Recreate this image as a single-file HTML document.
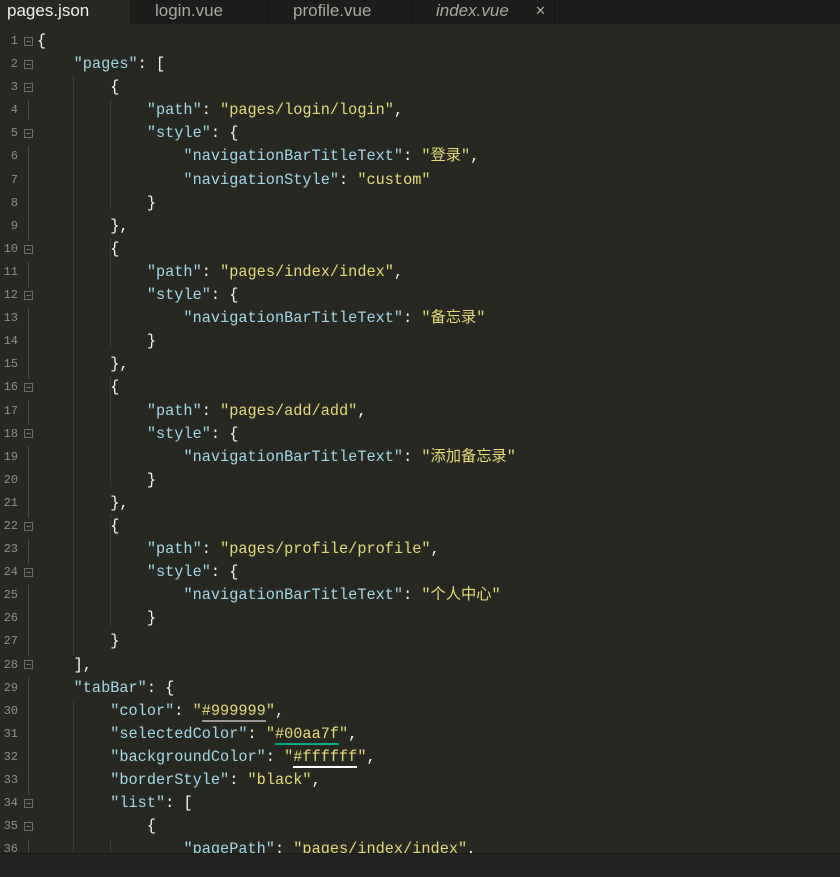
<!DOCTYPE html>
<html><head><meta charset="utf-8"><style>
body{margin:0;width:840px;height:876px;background:#272822;overflow:hidden;position:relative;font-family:"Liberation Mono","Noto Sans CJK SC",monospace}
.tabs{position:absolute;left:0;top:0;width:840px;height:24px;background:#1c1d1a}
.tab{position:absolute;top:0;height:24px;font-family:"Liberation Sans","DejaVu Sans",sans-serif;font-size:17px;line-height:22px;color:#a8a8a3;border-right:1px solid #151613;box-sizing:border-box;padding-left:24px}
.tab.a{background:#272822;color:#f0f0ea;padding-left:7px}
.code{position:absolute;left:37px;top:30px;font-size:15.25px;line-height:23.09px;white-space:pre;color:#f8f8f2}
.gut{position:absolute;left:0;top:30px;width:18px;text-align:right;font-size:12px;line-height:23.09px;color:#8f908a;white-space:pre}
.fold{position:absolute;left:24px;width:7px;height:7px;border:1px solid #6e6e68}
.fold:after{content:"";position:absolute;left:1px;right:1px;top:3px;height:1px;background:#6e6e68}
.vl{position:absolute;left:28px;width:1px;background:#4a4b45}
.k{color:#a3d8e8}.s{color:#e6db74}
.status{position:absolute;left:0;top:853px;width:840px;height:23px;background:#222320;border-top:1px solid #1a1b18}
.guide{position:absolute;width:0;border-left:1px dotted #4b4c46}
</style></head><body>
<div class="tabs">
<div class="tab a" style="left:0;width:131px">pages.json</div>
<div class="tab" style="left:131px;width:138px">login.vue</div>
<div class="tab" style="left:269px;width:143px">profile.vue</div>
<div class="tab" style="left:412px;width:143px;font-style:italic">index.vue<span style="position:absolute;left:123px;font-style:normal;font-size:13px">✕</span></div>
</div>
<div class="gut">1
2
3
4
5
6
7
8
9
10
11
12
13
14
15
16
17
18
19
20
21
22
23
24
25
26
27
28
29
30
31
32
33
34
35
36</div>
<div class="fold" style="top:37px"></div>
<div class="fold" style="top:60px"></div>
<div class="fold" style="top:83px"></div>
<div class="fold" style="top:129px"></div>
<div class="fold" style="top:245px"></div>
<div class="fold" style="top:291px"></div>
<div class="fold" style="top:383px"></div>
<div class="fold" style="top:429px"></div>
<div class="fold" style="top:522px"></div>
<div class="fold" style="top:568px"></div>
<div class="fold" style="top:660px"></div>
<div class="fold" style="top:799px"></div>
<div class="fold" style="top:822px"></div>
<div class="vl" style="top:100px;height:20px"></div>
<div class="vl" style="top:146px;height:95px"></div>
<div class="vl" style="top:262px;height:25px"></div>
<div class="vl" style="top:308px;height:71px"></div>
<div class="vl" style="top:400px;height:25px"></div>
<div class="vl" style="top:446px;height:72px"></div>
<div class="vl" style="top:539px;height:25px"></div>
<div class="vl" style="top:585px;height:71px"></div>
<div class="vl" style="top:677px;height:118px"></div>
<div class="vl" style="top:839px;height:14px"></div>
<div class="guide" style="left:73px;top:76px;height:580px"></div>
<div class="guide" style="left:73px;top:700px;height:153px"></div>
<div class="guide" style="left:110px;top:100px;height:110px"></div>
<div class="guide" style="left:110px;top:238px;height:110px"></div>
<div class="guide" style="left:110px;top:376px;height:110px"></div>
<div class="guide" style="left:110px;top:515px;height:110px"></div>
<div class="guide" style="left:110px;top:840px;height:13px"></div>
<div class="code">{
    <span class="k">"pages"</span>: [
        {
            <span class="k">"path"</span>: <span class="s">"pages/login/login"</span>,
            <span class="k">"style"</span>: {
                <span class="k">"navigationBarTitleText"</span>: <span class="s">"登录"</span>,
                <span class="k">"navigationStyle"</span>: <span class="s">"custom"</span>
            }
        },
        {
            <span class="k">"path"</span>: <span class="s">"pages/index/index"</span>,
            <span class="k">"style"</span>: {
                <span class="k">"navigationBarTitleText"</span>: <span class="s">"备忘录"</span>
            }
        },
        {
            <span class="k">"path"</span>: <span class="s">"pages/add/add"</span>,
            <span class="k">"style"</span>: {
                <span class="k">"navigationBarTitleText"</span>: <span class="s">"添加备忘录"</span>
            }
        },
        {
            <span class="k">"path"</span>: <span class="s">"pages/profile/profile"</span>,
            <span class="k">"style"</span>: {
                <span class="k">"navigationBarTitleText"</span>: <span class="s">"个人中心"</span>
            }
        }
    ],
    <span class="k">"tabBar"</span>: {
        <span class="k">"color"</span>: <span class="s">"<span style="border-bottom:2px solid #999">#999999</span>"</span>,
        <span class="k">"selectedColor"</span>: <span class="s">"<span style="border-bottom:2px solid #00aa7f">#00aa7f</span>"</span>,
        <span class="k">"backgroundColor"</span>: <span class="s">"<span style="border-bottom:2px solid #fff">#ffffff</span>"</span>,
        <span class="k">"borderStyle"</span>: <span class="s">"black"</span>,
        <span class="k">"list"</span>: [
            {
                <span class="k">"pagePath"</span>: <span class="s">"pages/index/index"</span>,</div>
<div class="status"></div>
</body></html>
